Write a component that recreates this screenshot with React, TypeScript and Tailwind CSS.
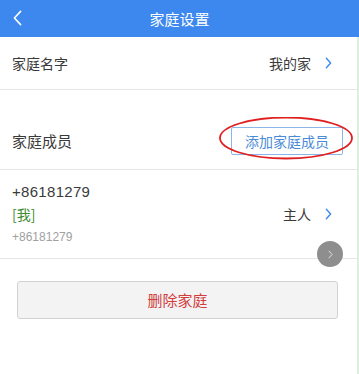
import React from 'react';

const cjk = { fontFamily: '"Noto Sans CJK SC", "Noto Sans", sans-serif' };

function Chevron({ className }: { className?: string }) {
  return (
    <svg viewBox="0 0 8 14" className={className} fill="none" stroke="currentColor" strokeWidth="1.6" strokeLinecap="round" strokeLinejoin="round">
      <path d="M1.5 1.5 L6.5 7 L1.5 12.5" />
    </svg>
  );
}

export default function App() {
  return (
    <div className="w-[359px] h-[374px] bg-white overflow-hidden text-[#3a3a3a]" style={cjk}>
      {/* top bar */}
      <div className="relative h-[37px] bg-[#3c88ee] flex items-center justify-center">
        <svg viewBox="0 0 10 18" className="absolute left-[13px] top-[10px] w-[9px] h-[16px] text-white" fill="none" stroke="currentColor" strokeWidth="1.8" strokeLinecap="round" strokeLinejoin="round">
          <path d="M8.5 1.5 L1.5 9 L8.5 16.5" />
        </svg>
        <span className="text-white text-[15px] leading-none">家庭设置</span>
      </div>

      <div className="relative h-[337px] border-r-2 border-[#dcefdc]">
        {/* family name */}
        <div className="h-[53px] flex items-center justify-between pl-[12px] pr-[25px] border-b border-[#e6e6e6]">
          <span className="text-[14px]">家庭名字</span>
          <div className="flex items-center gap-[14px]">
            <span className="text-[14px]">我的家</span>
            <Chevron className="w-[7px] h-[12px] text-[#3c88ee]" />
          </div>
        </div>

        {/* members header */}
        <div className="h-[80px] pt-[37px] flex items-start justify-between pl-[12px] pr-[14px] border-b border-[#e6e6e6]">
          <span className="text-[15px] mt-[3px]">家庭成员</span>
          <div className="relative">
            <button className="w-[112px] h-[28px] border border-[#8ab6ea] rounded-[2px] text-[#4a8bd8] text-[14px] leading-none">
              添加家庭成员
            </button>
            <svg viewBox="0 0 140 44" className="absolute left-[-15px] top-[-10px] w-[140px] h-[44px] pointer-events-none" fill="none">
              <ellipse cx="70" cy="21" rx="66" ry="20.5" stroke="#e02020" strokeWidth="1.8" />
            </svg>
          </div>
        </div>

        {/* member */}
        <div className="relative h-[89px] flex items-center justify-between pl-[12px] pr-[25px] border-b border-[#e6e6e6]">
          <div className="flex flex-col">
            <span className="text-[15px] leading-[20px] tracking-[0.3px]" style={{ fontFamily: '"Liberation Sans", Arial, sans-serif' }}>+86181279</span>
            <span className="text-[14px] leading-[22px] text-[#3d8c2f] mt-[1px]">[我]</span>
            <span className="text-[12px] leading-[20px] text-[#a0a0a0] mt-[2px]" style={{ fontFamily: '"Liberation Sans", Arial, sans-serif' }}>+86181279</span>
          </div>
          <div className="flex items-center gap-[14px]">
            <span className="text-[14px]">主人</span>
            <Chevron className="w-[7px] h-[12px] text-[#3c88ee]" />
          </div>
          <div className="absolute right-[14px] bottom-[-9px] w-[26px] h-[26px] rounded-full bg-[#8e8e8e] flex items-center justify-center">
            <Chevron className="w-[5px] h-[9px] text-[#e0e0e0]" />
          </div>
        </div>

        {/* delete */}
        <div className="px-[17px] pt-[22px] pr-[19px]">
          <button className="w-full h-[38px] bg-[#f3f3f3] border border-[#d2d2d2] rounded-[3px] text-[#d23c3c] text-[15px]">
            删除家庭
          </button>
        </div>
      </div>
    </div>
  );
}
